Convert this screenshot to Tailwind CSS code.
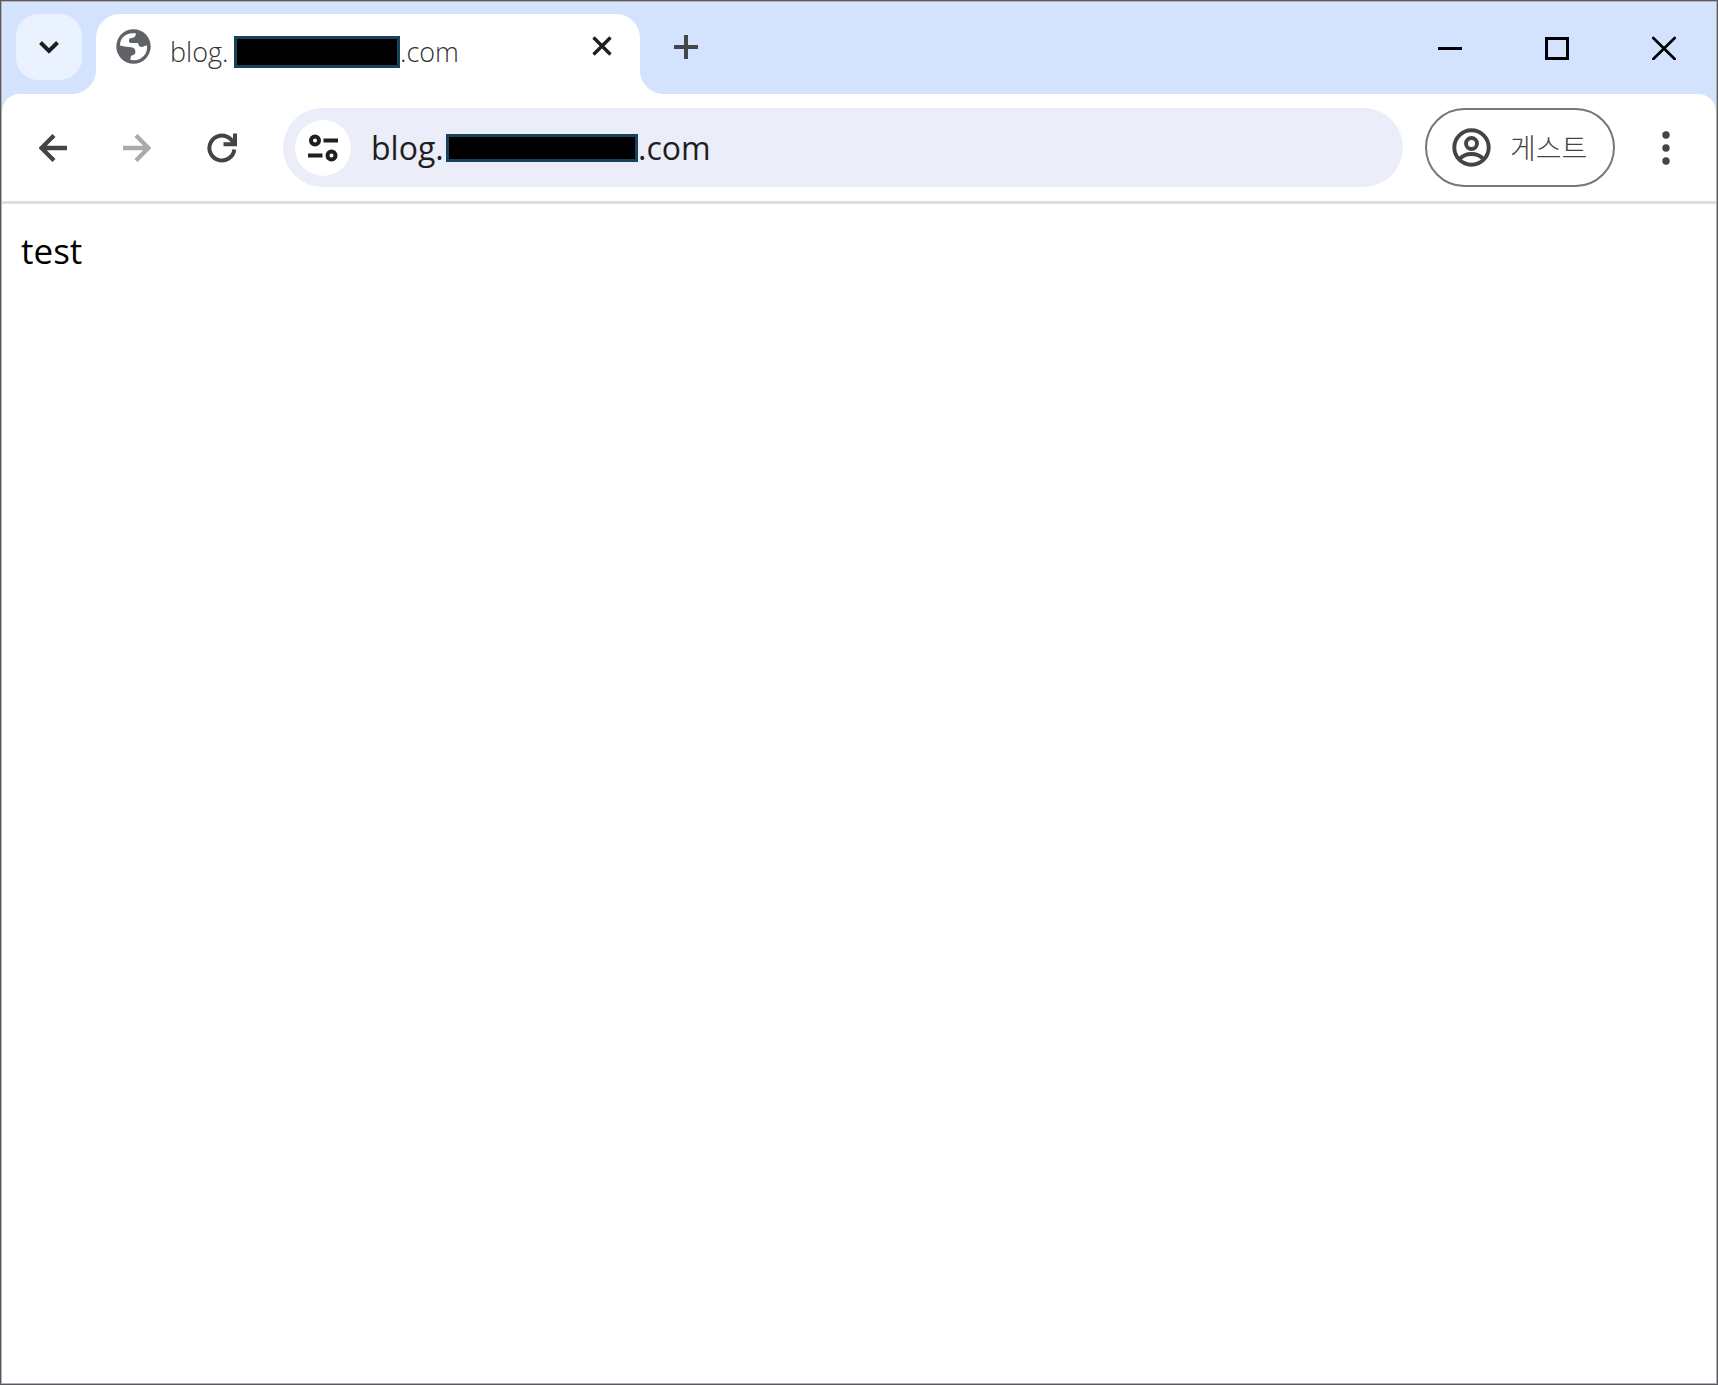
<!DOCTYPE html>
<html lang="ko">
<head>
<meta charset="utf-8">
<meta name="viewport" content="width=device-width, initial-scale=1">
<title>blog</title>
<script src="https://cdn.jsdelivr.net/npm/@tailwindcss/browser@4"></script>
</head>
<body class="relative flex min-h-screen flex-col border border-[#58595d] bg-white font-['Open_Sans','Noto_Sans_CJK_KR',sans-serif] text-[#1f1f1f]">
  <!-- window edge, lower part -->
  <div class="absolute top-[352px] -bottom-px -left-px w-px bg-[#1f2a55]"></div>
  <div class="absolute -bottom-px -left-px h-px w-[800px] bg-[#1d4257]"></div>

  <div class="flex grow flex-col border border-black/30 bg-clip-padding">
    <div class="bg-[#d3e2fd]">
      <!-- tab strip -->
      <header class="flex h-[92px] items-start">
        <button aria-label="Search tabs" class="mt-3 ml-[14px] flex size-[66px] items-center justify-center rounded-[22px] bg-[#ebf2ff]">
          <svg class="size-6" viewBox="0 0 24 24" fill="none" stroke="#1f1f1f" stroke-width="4"><path d="M3.500 7.500l8.500 8.500 8.500-8.500"/></svg>
        </button>

        <div class="relative mt-3 ml-[14px] flex h-20 w-[544px] items-center rounded-t-3xl bg-white pr-6 pl-5">
          <svg class="absolute bottom-0 -left-6 size-6" viewBox="0 0 24 24" fill="#fff"><path d="M24 0v24H0C13.300 24 24 13.300 24 0z"/></svg>
          <svg class="absolute -right-6 bottom-0 size-6" viewBox="0 0 24 24" fill="#fff"><path d="M0 0v24h24C10.700 24 0 13.300 0 0z"/></svg>
          <svg class="mb-4 size-[35px]" viewBox="0 0 35 35"><circle cx="17.500" cy="17.500" r="17.200" fill="#5f6368"/><path fill="#fff" d="M4 16.500C3.800 9.500 9.500 4.300 16.500 4.300h3.300c.3 2.700-1 4.500-4.300 4.700-2.200.1-2.700 1.500-2.500 3 .1 1.500 1 2 2.500 2H22c.5 2.700 1.500 4 4 4 1.500 0 2-1.300 5-1.500C32 25 25.500 31.300 18 31.300l-3.500-.3c0-3.300.3-4.700 2.500-5 2-.3 2.500-1.500 2.300-4-.2-2.700-2.300-3.700-4.300-3.800C12 18 9 17.500 4 16.500z"/></svg>
          <div class="mb-1 ml-[19px] flex grow items-center text-[27px] leading-8 whitespace-nowrap text-[#333]">
            <span class="h-8 w-16 font-light">blog.</span>
            <span class="h-8 w-[166px] border-[3px] border-[#17425a] bg-black"></span>
            <span class="h-8 font-light">.com</span>
          </div>
          <button aria-label="Close tab" class="mb-4 flex size-7 items-center justify-center">
            <svg class="size-5" viewBox="0 0 20 20" stroke="#1f1f1f" stroke-width="3.400"><path d="M1.500 1.500l17 17m0-17l-17 17"/></svg>
          </button>
        </div>

        <button aria-label="New tab" class="mt-[29px] ml-[30px] flex size-8 items-center justify-center">
          <svg class="size-6" viewBox="0 0 24 24" stroke="#444649" stroke-width="4"><path d="M12 0v24M0 12h24"/></svg>
        </button>

        <div class="mt-[30px] mr-9 ml-auto flex gap-[75px]">
          <button aria-label="Minimize" class="flex h-8 w-8 items-center justify-center"><svg class="size-6" viewBox="0 0 24 24" stroke="#000" stroke-width="3"><path d="M0 12.500h24"/></svg></button>
          <button aria-label="Maximize" class="flex h-8 w-8 items-center justify-center"><svg class="size-6" viewBox="0 0 24 24" stroke="#000" stroke-width="3" fill="none"><path d="M1.500 2.500h21v20h-21z"/></svg></button>
          <button aria-label="Close" class="flex h-8 w-8 items-center justify-center"><svg class="size-6" viewBox="0 0 24 24" stroke="#000" stroke-width="2.700" stroke-linecap="round"><path d="M1.300 2l21.400 21m0-21l-21.400 21"/></svg></button>
        </div>
      </header>

      <!-- toolbar -->
      <nav class="flex h-[110px] items-center rounded-t-[18px] border-b-[3px] border-[#dfdfdf] bg-white pr-[34px]">
        <button aria-label="Back" class="ml-[35px] flex size-8 items-center justify-center">
          <svg class="size-7" viewBox="0 0 28 28" fill="none" stroke="#444" stroke-width="4.300"><path d="M28 14H3M15 1.500L2.500 14 15 26.500"/></svg>
        </button>
        <button aria-label="Forward" disabled class="ml-[52px] flex size-8 items-center justify-center">
          <svg class="size-7" viewBox="0 0 28 28" fill="none" stroke="#aaa" stroke-width="4.300"><path d="M0 14h25M13 1.500L25.500 14 13 26.500"/></svg>
        </button>
        <button aria-label="Reload" class="ml-[53px] flex size-8 items-center justify-center">
          <svg class="size-[30px]" viewBox="0 0 30 30" fill="none" stroke="#444" stroke-width="4"><path d="M27.300 16.500A12.500 12.500 0 1 1 23 5.500L27.500 10.500"/><path d="M28 .5v10.800H16.500"/></svg>
        </button>

        <div class="ml-[45px] flex h-[79px] min-w-0 grow items-center rounded-full bg-[#ebeef8] pl-3">
          <button aria-label="Site information" class="flex size-14 shrink-0 items-center justify-center rounded-full bg-white">
            <svg class="size-[30px]" viewBox="0 0 30 30" fill="none" stroke="#1f1f1f" stroke-width="4"><circle cx="7" cy="7.500" r="4"/><path d="M15.500 7.500H30M0 22.500h14.500"/><circle cx="23.500" cy="22.500" r="4"/></svg>
          </button>
          <div class="ml-5 flex min-w-0 grow items-center text-[32px] leading-10">
            <input aria-label="Address, start" value="blog." class="w-[75px] shrink-0 outline-none">
            <span class="h-7 w-48 shrink-0 border-[3px] border-[#17425a] bg-black"></span>
            <input aria-label="Address, end" value=".com" class="w-0 min-w-0 grow outline-none">
          </div>
        </div>

        <button class="ml-[22px] flex h-[79px] w-[190px] items-center rounded-full border-2 border-[#777] pl-[25px] text-[#444]">
          <svg class="size-[39px]" viewBox="0 0 39 39" fill="none" stroke="#444" stroke-width="3.900"><circle cx="19.500" cy="19.500" r="17.200"/><circle cx="19.500" cy="15.500" r="5.500"/><path d="M7.500 31c3-3.300 7.300-5 12-5s9 1.700 12 5"/></svg>
          <span class="ml-[19px] text-[28px] leading-8 font-light whitespace-nowrap">게스트</span>
        </button>
        <button aria-label="Menu" class="ml-[35px] flex size-8 items-center justify-center">
          <svg class="h-[34px] w-2" viewBox="0 0 8 34" fill="#444"><circle cx="4" cy="4" r="3.700"/><circle cx="4" cy="17" r="3.700"/><circle cx="4" cy="30" r="3.700"/></svg>
        </button>
      </nav>
    </div>

    <main class="grow px-[19px] pt-[22px] text-[35px] leading-[50px] text-black">test</main>
  </div>
</body>
</html>
